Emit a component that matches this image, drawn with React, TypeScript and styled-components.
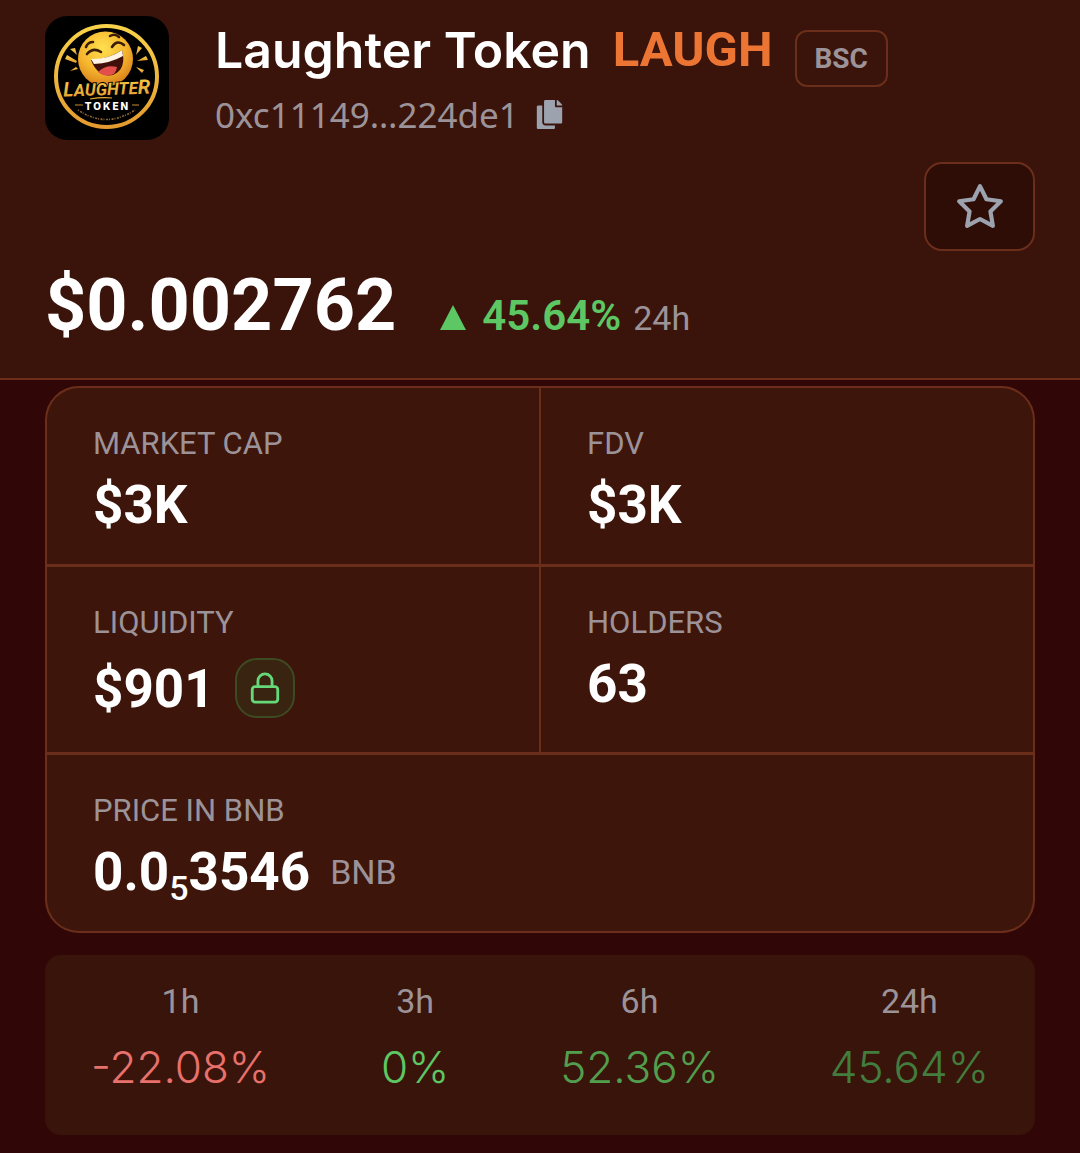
import React from 'react';
import styled, { createGlobalStyle } from 'styled-components';
import { FaCopy } from 'react-icons/fa';
import { FiLock, FiStar } from 'react-icons/fi';

const colors = {
  page: '#300706',
  header: '#3a130a',
  card: '#3d150b',
  panel: '#39140a',
  inset: '#2e0d07',
  border: '#6b2e1a',
  text: '#ffffff',
  muted: '#9c9399',
  orange: '#ed7534',
  green: '#5cc763',
  red: '#e8716c',
};

const GlobalStyle = createGlobalStyle`
  * { box-sizing: border-box; }

  body {
    margin: 0;
    background: ${colors.page};
    color: ${colors.text};
    font-family: Roboto, 'Liberation Sans', sans-serif;
  }

  h1, p, dl, dd { margin: 0; }
`;

const Header = styled.header`
  display: flex;
  flex-direction: column;
  padding: 16px 45px 32px;
  background: ${colors.header};
  border-bottom: 2px solid ${colors.border};
`;

const Identity = styled.div`
  display: flex;
  gap: 46px;
  min-height: 128px;
`;

const Logo = styled.svg`
  flex: none;
  width: 124px;
  height: 124px;
  border-radius: 22px;
`;

const TitleRow = styled.div`
  display: flex;
  align-items: center;
  height: 68px;
`;

const TokenName = styled.h1`
  font-family: Inter, sans-serif;
  font-size: 50px;
  font-weight: 600;
  line-height: 68px;
`;

const Ticker = styled.span`
  margin-left: 22px;
  color: ${colors.orange};
  font-size: 49px;
  font-weight: 700;
  line-height: 68px;
`;

const ChainBadge = styled.span`
  margin: 16px 0 0 22px;
  padding: 0 18px;
  border: 2px solid ${colors.border};
  border-radius: 12px;
  color: ${colors.muted};
  font-size: 28px;
  font-weight: 700;
  line-height: 53px;
`;

const AddressRow = styled.div`
  display: flex;
  align-items: center;
  gap: 16px;
  height: 60px;
  color: ${colors.muted};
  font-family: 'Noto Sans', sans-serif;
  font-size: 35px;
`;

const CopyButton = styled.button`
  display: flex;
  padding: 0;
  border: 0;
  background: none;
  color: #9ca3af;
  cursor: pointer;
`;

const FavoriteButton = styled.button`
  display: flex;
  align-items: center;
  justify-content: center;
  align-self: flex-end;
  width: 111px;
  height: 89px;
  margin-top: 18px;
  border: 2px solid ${colors.border};
  border-radius: 18px;
  background: ${colors.inset};
  color: #9ca3af;
  cursor: pointer;
`;

const PriceRow = styled.div`
  display: flex;
  align-items: baseline;
  margin-top: 15px;
`;

const Price = styled.p`
  font-size: 72px;
  font-weight: 700;
  line-height: 80px;
`;

const Change = styled.p`
  display: flex;
  align-items: baseline;
  margin-left: 44px;
  color: ${colors.green};
  font-size: 42px;
  font-weight: 600;
`;

const UpArrow = styled.svg`
  width: 26px;
  height: 25px;
  margin-right: 16px;
  fill: currentColor;
`;

const Period = styled.span`
  margin-left: 12px;
  color: ${colors.muted};
  font-size: 34px;
  font-weight: 400;
`;

const Main = styled.main`
  display: flex;
  flex-direction: column;
  gap: 22px;
  padding: 6px 45px 18px;
`;

const StatGrid = styled.dl`
  display: grid;
  grid-template-columns: 1fr 1fr;
  column-gap: 2px;
  row-gap: 3px;
  overflow: hidden;
  border: 2px solid ${colors.border};
  border-radius: 34px;
  background: ${colors.border};
`;

const StatCell = styled.div<{ $wide?: boolean }>`
  grid-column: ${({ $wide }) => ($wide ? '1 / -1' : 'auto')};
  padding: 36px 46px 28px;
  background: ${colors.card};
`;

const StatLabel = styled.dt`
  color: ${colors.muted};
  font-size: 31px;
  line-height: 40px;
`;

const StatValue = styled.dd`
  display: flex;
  align-items: center;
  min-height: 62px;
  margin-top: 10px;
  font-size: 53px;
  font-weight: 700;
  line-height: 62px;

  sub {
    font-size: 34px;
    font-weight: 500;
    line-height: 0;
    vertical-align: -10px;
  }
`;

const Unit = styled.span`
  margin-left: 20px;
  color: ${colors.muted};
  font-size: 34px;
  font-weight: 400;
`;

const LockBadge = styled.span`
  display: flex;
  align-items: center;
  justify-content: center;
  width: 60px;
  height: 60px;
  margin: 5px 0 6px 20px;
  border: 2px solid #3d4a22;
  border-radius: 22px;
  background: #382411;
  color: #66d878;
`;

const Performance = styled.dl`
  display: flex;
  justify-content: space-between;
  padding: 26px 46px 38px;
  border-radius: 16px;
  background: ${colors.panel};
`;

const PerformanceItem = styled.div`
  display: flex;
  flex-direction: column;
  gap: 16px;
  text-align: center;
`;

const Interval = styled.dt`
  color: ${colors.muted};
  font-size: 34px;
  line-height: 40px;
`;

const Percent = styled.dd<{ $color: string }>`
  color: ${({ $color }) => $color};
  font-family: Inter, sans-serif;
  font-size: 44px;
  font-weight: 300;
  line-height: 60px;
`;

const performance = [
  { interval: '1h', value: '-22.08%', color: colors.red },
  { interval: '3h', value: '0%', color: colors.green },
  { interval: '6h', value: '52.36%', color: '#519f4e' },
  { interval: '24h', value: '45.64%', color: '#427d3e' },
];

const TokenLogo: React.FC = () => (
  <Logo viewBox="0 0 124 124" role="img" aria-label="Laughter Token logo">
    <defs>
      <linearGradient id="gold" x1="0" y1="0" x2="0" y2="1">
        <stop offset="0" stopColor="#f8d24a" />
        <stop offset="1" stopColor="#e49a2e" />
      </linearGradient>
      <radialGradient id="face" cx="0.45" cy="0.3" r="0.7">
        <stop offset="0" stopColor="#ffe04f" />
        <stop offset="0.6" stopColor="#f5b52c" />
        <stop offset="1" stopColor="#d9801c" />
      </radialGradient>
    </defs>
    <rect width="124" height="124" fill="#000" />
    <circle cx="61.5" cy="60.5" r="50.5" fill="none" stroke="url(#gold)" strokeWidth="4" />
    <circle cx="60.5" cy="43" r="27.5" fill="url(#face)" />
    <g fill="none" stroke="#3a1d08" strokeWidth="2.6" strokeLinecap="round">
      <path d="M41 31 Q43 26 48 26" />
      <path d="M65 20 Q70 17 74 21" />
      <path d="M42 38 Q48 31 56 36" />
      <path d="M67 31 Q72 23 79 29" />
    </g>
    <path d="M46 44 Q64 43 77 34 Q82 53 68 59 Q53 62 46 44Z" fill="#42100b" />
    <path d="M46 43 Q65 43 77 34 L78 40 Q66 47 49 48Z" fill="#fff4e4" />
    <path d="M53 56 Q61 48 72 51 Q71 58 66 59 Q59 61 53 56Z" fill="#e3504b" />
    <g fill="url(#gold)">
      <path d="M25 33 L30 32 L32 39Z" />
      <path d="M20 43 L22 39 L32 45 L31 47Z" />
      <path d="M25 55 L31 51 L33 53Z" />
      <path d="M91 39 L93 30 L97 32Z" />
      <path d="M92 45 L101 40 L103 44Z" />
      <path d="M91 51 L99 54 L97 57Z" />
    </g>
    <text
      x="62"
      y="79"
      textAnchor="middle"
      fill="url(#gold)"
      stroke="#000"
      strokeWidth="2"
      paintOrder="stroke"
      fontFamily="Roboto, sans-serif"
      fontSize="17"
      fontWeight="700"
      fontStyle="italic"
      transform="rotate(-2 62 78)"
    >
      <tspan fontSize="20">L</tspan>AUGHTE<tspan fontSize="20">R</tspan>
    </text>
    <path d="M45 83 Q56 81 67 82" fill="none" stroke="#eaaa35" strokeWidth="1.2" />
    <path d="M30 89h8M87 89h7" stroke="#c98b37" strokeWidth="1.2" />
    <text
      x="62.5"
      y="93.5"
      textAnchor="middle"
      fill="#fff"
      fontFamily="Inter, sans-serif"
      fontSize="10"
      fontWeight="800"
      letterSpacing="2"
    >
      TOKEN
    </text>
    <path d="M33 94 Q61 113 90 94" fill="none" stroke="#8d6737" strokeWidth="1.6" strokeDasharray="1 1.5 2 1" />
  </Logo>
);

const App: React.FC = () => (
  <>
    <GlobalStyle />
    <Header>
      <Identity>
        <TokenLogo />
        <div>
          <TitleRow>
            <TokenName>Laughter Token</TokenName>
            <Ticker>LAUGH</Ticker>
            <ChainBadge>BSC</ChainBadge>
          </TitleRow>
          <AddressRow>
            <span>0xc11149…224de1</span>
            <CopyButton type="button" aria-label="Copy address">
              <FaCopy size={29} />
            </CopyButton>
          </AddressRow>
        </div>
      </Identity>

      <FavoriteButton type="button" aria-label="Add to favorites">
        <FiStar size={50} />
      </FavoriteButton>

      <PriceRow>
        <Price>$0.002762</Price>
        <Change>
          <UpArrow viewBox="0 0 26 25" aria-hidden="true">
            <path d="M13 0 L26 25 H0Z" />
          </UpArrow>
          45.64%
          <Period>24h</Period>
        </Change>
      </PriceRow>
    </Header>

    <Main>
      <StatGrid>
        <StatCell>
          <StatLabel>MARKET CAP</StatLabel>
          <StatValue>$3K</StatValue>
        </StatCell>
        <StatCell>
          <StatLabel>FDV</StatLabel>
          <StatValue>$3K</StatValue>
        </StatCell>
        <StatCell>
          <StatLabel>LIQUIDITY</StatLabel>
          <StatValue>
            $901
            <LockBadge role="img" aria-label="Liquidity locked">
              <FiLock size={34} />
            </LockBadge>
          </StatValue>
        </StatCell>
        <StatCell>
          <StatLabel>HOLDERS</StatLabel>
          <StatValue>63</StatValue>
        </StatCell>
        <StatCell $wide>
          <StatLabel>PRICE IN BNB</StatLabel>
          <StatValue>
            <span>0.0<sub>5</sub>3546</span>
            <Unit>BNB</Unit>
          </StatValue>
        </StatCell>
      </StatGrid>

      <Performance>
        {performance.map(({ interval, value, color }) => (
          <PerformanceItem key={interval}>
            <Interval>{interval}</Interval>
            <Percent $color={color}>{value}</Percent>
          </PerformanceItem>
        ))}
      </Performance>
    </Main>
  </>
);

export default App;
